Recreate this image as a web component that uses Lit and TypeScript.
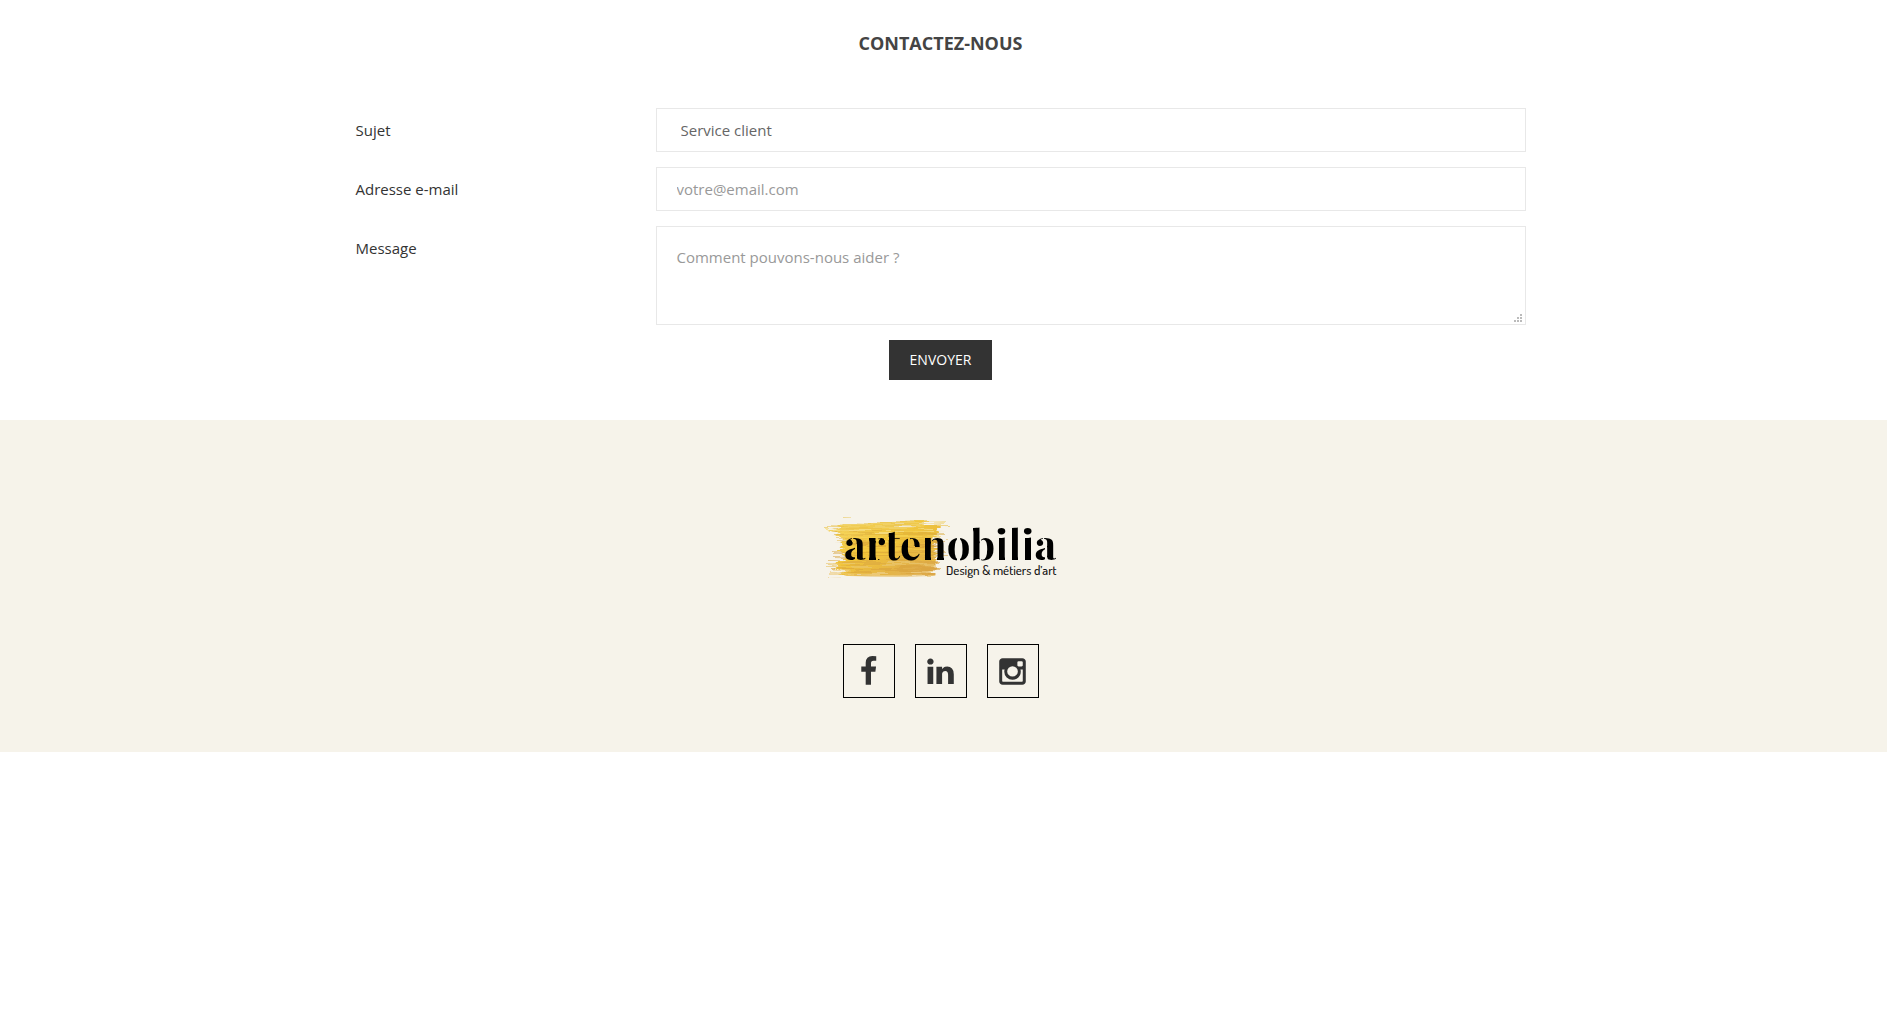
import { LitElement, html, css, svg } from "lit";
import { customElement } from "lit/decorators.js";

/** Gaps cut out of the wordmark to give it its stencil look: x, y, width, height. */
const STENCIL_CUTS: number[][] = [
  [26, 16, 1, 6], [29, 24, 2, 17],
  [40, 16, 3, 25], [50, 16, 2, 25],
  [58, 17, 5, 3],
  [82, 16, 2, 12], [82, 26, 7, 1],
  [95, 16, 4, 25], [105, 16, 1, 25], [106, 37, 5, 4], [118, 37, 4, 4],
  [131, 16, 3, 26],
  [143, 5, 4, 12], [154, 14, 1, 28],
  [169, 16, 4, 25], [179, 16, 4, 25],
  [183, 5, 3, 36], [192, 5, 4, 36],
  [195, 16, 4, 25], [205, 16, 4, 25],
  [217, 16, 1, 6], [219, 24, 2, 17],
];

/** Paint strokes: start x, end x, y, colour, opacity. */
const STREAKS: [number, number, number, string, number][] = [
  [16, 98, 2, "#e9c65a", 0.6], [4, 116, 4, "#f0d377", 0.6], [-2, 120, 7, "#eabf48", 0.6],
  [0, 108, 10, "#f5de88", 0.8], [5, 122, 13, "#d9a93a", 0.5], [14, 116, 17, "#f7d75a", 0.6],
  [10, 122, 21, "#e3b23c", 0.5], [20, 116, 25, "#cf9836", 0.5], [12, 115, 29, "#f5cb45", 0.7],
  [8, 120, 33, "#d59f38", 0.5], [16, 111, 37, "#f0c23c", 0.7], [2, 114, 41, "#dba743", 0.6],
  [0, 110, 45, "#eac873", 0.7], [5, 111, 49, "#d8a23e", 0.6], [4, 110, 53, "#eed08a", 0.7],
  [24, 104, 56, "#e4bd66", 0.6],
];

@customElement("brand-logo")
export class BrandLogo extends LitElement {
  static styles = css`
    :host { display: block; }
    svg { display: block; width: 230px; height: 60px; overflow: visible; }
    .word { font: 700 42px "Playfair Display", "Liberation Serif", serif; fill: #000; }
    .tag { font: 500 13px "Dosis", "Open Sans", sans-serif; fill: #111; }
  `;

  render() {
    return html`
      <svg viewBox="0 0 230 60" role="img" aria-label="artenobilia, Design &amp; métiers d’art">
        <defs>
          <linearGradient id="gold" x1="0" y1="0" x2="1" y2="1">
            <stop offset="0" stop-color="#f3d568"/>
            <stop offset=".45" stop-color="#f2c63a"/>
            <stop offset="1" stop-color="#d9a450"/>
          </linearGradient>
          <filter id="brush" x="-10%" y="-10%" width="120%" height="120%">
            <feTurbulence type="fractalNoise" baseFrequency="0.02 0.3" numOctaves="3" seed="4" result="n"/>
            <feDisplacementMap in="SourceGraphic" in2="n" scale="16" xChannelSelector="R" yChannelSelector="A"/>
          </filter>
          <mask id="stencil" maskUnits="userSpaceOnUse" x="0" y="0" width="240" height="60">
            <rect width="240" height="60" fill="#fff"/>
            ${STENCIL_CUTS.map(([x, y, w, h]) => svg`<rect x=${x} y=${y} width=${w} height=${h} fill="#000"/>`)}
          </mask>
        </defs>
        <g filter="url(#brush)">
          <path fill="url(#gold)" d="M16 3 L96 3 L112 7 L114 14 L106 20 L114 27 L106 34 L112 41 L106 47 L111 52 L102 55 L26 56 L8 50 L14 42 L20 34 L12 30 L18 22 L8 14 L0 11 L12 7 Z"/>
          ${STREAKS.map(([a, b, y, c, o]) => svg`<path d="M${a} ${y} Q${(a + b) / 2} ${y + 2} ${b} ${y}" stroke=${c} stroke-width="2" opacity=${o} fill="none"/>`)}
        </g>
        <g mask="url(#stencil)"><text class="word" x="18" y="40">artenobilia</text></g>
        <text class="tag" x="120" y="55">Design &amp; métiers d’art</text>
      </svg>`;
  }
}

@customElement("app-root")
export class AppRoot extends LitElement {
  static styles = css`
    :host { display: block; font: 15px/24px "Open Sans", sans-serif; color: #333; background: #fff; }
    * { box-sizing: border-box; }
    .contact { padding: 30px 6px 40px 0; }
    h2 { margin: 0 0 52px; font-size: 18px; line-height: 26px; font-weight: 700; text-align: center; color: #444; }
    form { display: grid; grid-template-columns: 300px 1fr; row-gap: 15px; max-width: 1170px; margin: 0 auto; }
    label { padding-top: 10px; }
    .field {
      display: block; width: 100%; height: 44px; margin: 0; padding: 0 20px; border: 1px solid #e8e8e8; border-radius: 0;
      background: #fff; font: inherit; color: #666; appearance: none; outline-offset: 2px;
    }
    select.field { padding-left: 24px; }
    .field::placeholder { color: #999; opacity: 1; }
    .message { height: 99px; padding: 18px 20px; resize: vertical; }
    .message::-webkit-resizer {
      background:
        linear-gradient(#bbb, #bbb) 10px 5px / 2px 2px no-repeat,
        linear-gradient(#bbb, #bbb) 7px 8px / 2px 2px no-repeat,
        linear-gradient(#bbb, #bbb) 10px 8px / 2px 2px no-repeat,
        linear-gradient(#bbb, #bbb) 4px 11px / 2px 2px no-repeat,
        linear-gradient(#bbb, #bbb) 7px 11px / 2px 2px no-repeat,
        linear-gradient(#bbb, #bbb) 10px 11px / 2px 2px no-repeat;
    }
    .send {
      grid-column: 1 / -1; justify-self: center; height: 40px; padding: 0 21px; border: 0;
      background: #333; color: #fff; font: 14px/20px "Open Sans", sans-serif; text-transform: uppercase; cursor: pointer;
    }
    footer { display: flex; flex-direction: column; align-items: center; gap: 64px; padding: 100px 6px 54px 0; background: #f6f3ea; }
    .social { display: flex; gap: 20px; }
    .social a { display: flex; align-items: center; justify-content: center; width: 52px; height: 54px; border: 1px solid #000; color: #333; }
    .social svg { width: 31px; height: 31px; fill: currentColor; }
  `;

  render() {
    return html`
      <section class="contact">
        <h2>CONTACTEZ-NOUS</h2>
        <form @submit=${(e: Event) => e.preventDefault()}>
          <label for="subject">Sujet</label>
          <select class="field" id="subject"><option>Service client</option></select>
          <label for="email">Adresse e-mail</label>
          <input class="field" id="email" type="email" placeholder="votre@email.com">
          <label for="message">Message</label>
          <textarea class="field message" id="message" placeholder="Comment pouvons-nous aider ?"></textarea>
          <button class="send">Envoyer</button>
        </form>
      </section>
      <footer>
        <brand-logo></brand-logo>
        <nav class="social" aria-label="Réseaux sociaux">
          <a href="#facebook" aria-label="Facebook"><svg viewBox="0 0 1792 1792"><path d="M1343 12v264h-157q-86 0-116 36t-30 108v189h293l-39 296h-254v759h-306v-759h-255v-296h255v-218q0-186 104-288.500t277-102.500q147 0 228 12z"/></svg></a>
          <a href="#linkedin" aria-label="LinkedIn"><svg viewBox="0 0 1792 1792"><path d="M477 625v991h-330v-991h330zm21-306q1 73-50.500 122t-135.500 49h-2q-82 0-132-49t-50-122q0-74 51.500-122.500t134.500-48.500 133 48.500 51 122.500zm1166 729v568h-329v-530q0-105-40.500-164.500t-126.500-59.500q-63 0-105.500 34.500t-63.500 85.500q-11 30-11 81v553h-329q2-399 2-647t-1-296l-1-48h329v144h-2q20-32 41-56t56.500-52 87-43.500 114.500-15.500q171 0 275 113.500t104 332.500z"/></svg></a>
          <a href="#instagram" aria-label="Instagram"><svg viewBox="0 0 1792 1792"><path d="M1490 1426v-648h-135q20 63 20 131 0 126-64 232.500t-174 168.500-240 62q-197 0-337-135.500t-140-327.500q0-68 20-131h-141v648q0 26 17.500 43.500t43.500 17.500h1069q25 0 43-17.500t18-43.500zm-284-533q0-124-90.500-211.500t-218.500-87.500q-127 0-217.500 87.500t-90.500 211.500 90.500 211.500 217.500 87.500q128 0 218.500-87.500t90.500-211.500zm284-360v-165q0-28-20-48.500t-49-20.500h-174q-29 0-49 20.500t-20 48.500v165q0 29 20 49t49 20h174q29 0 49-20t20-49zm174-208v1142q0 81-58 139t-139 58h-1142q-81 0-139-58t-58-139v-1142q0-81 58-139t139-58h1142q81 0 139 58t58 139z"/></svg></a>
        </nav>
      </footer>`;
  }
}
